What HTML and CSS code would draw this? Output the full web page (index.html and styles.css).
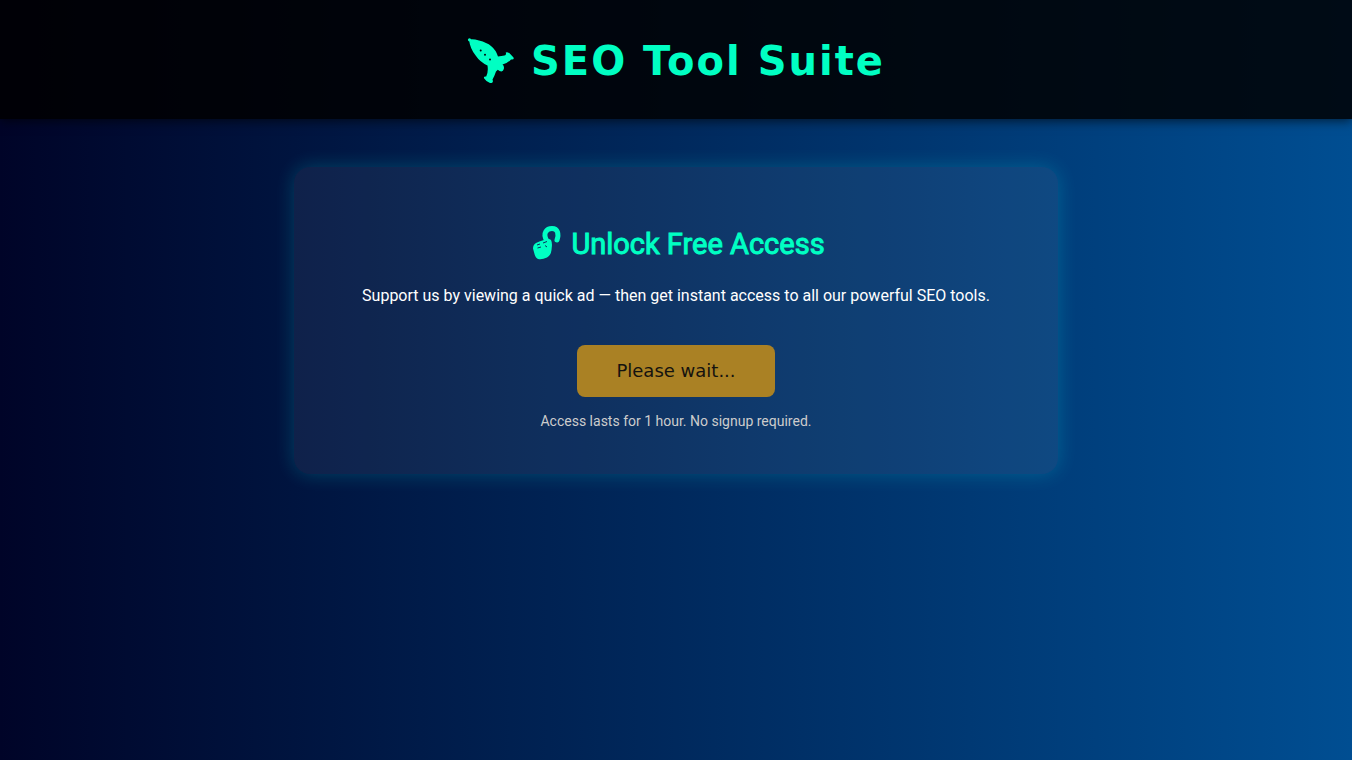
FILE: index.html
```html
<!DOCTYPE html>
<html lang="en">
<head>
<meta charset="utf-8">
<meta name="viewport" content="width=device-width, initial-scale=1">
<title>SEO Tool Suite</title>
<link rel="stylesheet" href="styles.css">
</head>
<body class="page">
<header class="site-header">
  <h1 class="brand">
    <svg class="brand-icon" viewBox="-1 0 48 48" aria-hidden="true">
      <circle cx="1.5" cy="1.8" r="1.6"/>
      <path d="M1 1.5Q5 0.500 11 2.500Q19 4.500 23 8Q28 12 30 18.500L35 17.800Q39 17.500 37.700 14.500Q40 13.500 42 15.800L45.500 19.500Q46.500 22 43 21.500Q40 25 34.500 26.500Q36.500 28 35.800 31Q35 34.500 31.500 33L29.800 31.800L28 33.500Q26.500 38 24.500 41.500Q26 45 22 45Q18.500 44 16 40.200Q15.500 38 18.200 38.500Q20.500 34 19.500 27.500Q12 24 8 18Q2 11 1 1.500Z"/>
      <g class="brand-icon-dots"><circle cx="12.700" cy="12.500" r="1"/><circle cx="17" cy="16.800" r="1"/><circle cx="22" cy="21.500" r="1"/></g>
    </svg>
    <span>SEO Tool Suite</span>
  </h1>
</header>
<main class="card">
  <h2 class="card-title">
    <svg class="lock-icon" viewBox="0 0 30 36" aria-hidden="true">
      <path class="shackle" d="M15 15C10 7 15 2.500 20 2.500C26 2.500 27 8 25 14"/>
      <path d="M4 17Q8 15 12 14Q17 12 19 14Q20.500 17 19.700 22Q19.500 29 15 31.500Q10 34 6 33Q3.500 32 2.500 28L1 22.500Q1 18.500 4 17Z"/>
      <path class="lock-detail" d="M5 19L8 18M11 17L15 15.500M5.500 22L9 21M13 19.500L15 21"/>
    </svg>
    <span>Unlock Free Access</span>
  </h2>
  <p class="lead">Support us by viewing a quick ad — then get instant access to all our powerful SEO tools.</p>
  <button class="unlock" type="button" disabled>Please wait...</button>
  <p class="note">Access lasts for 1 hour. No signup required.</p>
</main>
</body>
</html>
```
FILE: styles.css
```css
* { box-sizing: border-box; }
.page {
  min-height: 100vh;
  margin: 0;
  background: linear-gradient(to right, #000428, #004e92);
  color: #fff;
  font-family: Roboto, sans-serif;
}
.site-header {
  padding: 34px 32px 30px;
  background: rgba(0, 0, 0, 0.85);
  box-shadow: 0 2px 10px rgba(0, 0, 0, 0.6);
}
.brand {
  display: flex;
  align-items: center;
  justify-content: center;
  gap: 16px;
  margin: 0;
  color: #00ffc3;
  font: bold 40px/55px "DejaVu Sans", sans-serif;
  letter-spacing: 2px;
}
.brand-icon { width: 48px; height: 48px; fill: currentColor; }
.brand-icon-dots { fill: #00040a; }
.card {
  max-width: 764px;
  margin: 48px auto;
  padding: 57px 32px 44px;
  border-radius: 16px;
  background: rgba(255, 255, 255, 0.06);
  box-shadow: 0 0 20px rgba(0, 255, 255, 0.2);
  text-align: center;
}
.card-title {
  display: flex;
  align-items: center;
  justify-content: center;
  gap: 9px;
  margin: 0 0 23px;
  padding-left: 5px;
  color: #00ffc3;
  font-size: 29px;
  font-weight: 400;
  line-height: 40px;
  -webkit-text-stroke: 1px currentColor;
}
.lock-icon { width: 30px; height: 36px; fill: currentColor; }
.shackle { fill: none; stroke: currentColor; stroke-width: 5; stroke-linecap: round; }
.lock-detail { fill: none; stroke: #0c3060; stroke-width: 1; }
.lead { margin: 0 0 40px; font-size: 16px; line-height: 18px; }
.unlock {
  padding: 16px 39px;
  border: 0;
  border-radius: 8px;
  background: #aa8124;
  color: #15130f;
  font: 18px/20px "DejaVu Sans", sans-serif;
}
.note { margin: 16px 0 0; color: #ccc; font-size: 14px; line-height: 17px; }
```
